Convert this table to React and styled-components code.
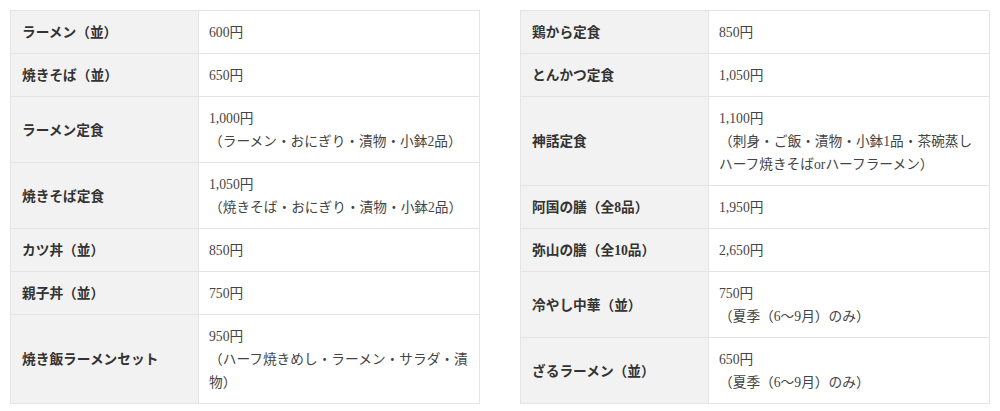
// Packages
import React from "react"
import styled, { createGlobalStyle } from "styled-components"

// Data
const LeftMenu = [
    { name: "ラーメン（並）", price: "600円" },
    { name: "焼きそば（並）", price: "650円" },
    { name: "ラーメン定食", price: "1,000円", note: "（ラーメン・おにぎり・漬物・小鉢2品）" },
    { name: "焼きそば定食", price: "1,050円", note: "（焼きそば・おにぎり・漬物・小鉢2品）" },
    { name: "カツ丼（並）", price: "850円" },
    { name: "親子丼（並）", price: "750円" },
    { name: "焼き飯ラーメンセット", price: "950円", note: "（ハーフ焼きめし・ラーメン・サラダ・漬物）" },
]

const RightMenu = [
    { name: "鶏から定食", price: "850円" },
    { name: "とんかつ定食", price: "1,050円" },
    { name: "神話定食", price: "1,100円", note: "（刺身・ご飯・漬物・小鉢1品・茶碗蒸しハーフ焼きそばorハーフラーメン）" },
    { name: "阿国の膳（全8品）", price: "1,950円" },
    { name: "弥山の膳（全10品）", price: "2,650円" },
    { name: "冷やし中華（並）", price: "750円", note: "（夏季（6～9月）のみ）" },
    { name: "ざるラーメン（並）", price: "650円", note: "（夏季（6～9月）のみ）" },
]

// Styles
const GlobalStyle = createGlobalStyle`
    body {
        margin: 0;
        background: #fff;
        font-family: "Liberation Serif", "Noto Sans CJK JP", serif;
        color: #333;
    }
`

const Page = styled.div`
    display: flex;
    gap: 40px;
    padding: 10px;
    align-items: flex-start;
`

const Table = styled.table`
    width: 471px;
    border-collapse: collapse;
    table-layout: fixed;
    font-size: 13.7px;
    line-height: 23px;
`

const Col = styled.col`
    width: ${props => props.$width || "auto"};
`

const Row = styled.tr`
    border: 1px solid #e4e4e4;
`

const Name = styled.th`
    background-color: #f2f2f2;
    border: 1px solid #e4e4e4;
    padding: 10px 6px 9px 11px;
    text-align: left;
    font-weight: 700;
    color: #333;
    vertical-align: middle;
`

const Price = styled.td`
    border: 1px solid #e4e4e4;
    padding: 10px 4px 9px 10px;
    vertical-align: middle;
    background-color: #fff;
    color: #444;
`

const Note = styled.span`
    display: block;
`

function MenuTable({ items }) {
    return (
        <Table>
            <colgroup>
                <Col $width="188px" />
                <Col />
            </colgroup>
            <tbody>
                {items.map(item => (
                    <Row key={item.name}>
                        <Name>{item.name}</Name>
                        <Price>
                            {item.price}
                            {item.note && <Note>{item.note}</Note>}
                        </Price>
                    </Row>
                ))}
            </tbody>
        </Table>
    )
}

function App() {
    return (
        <>
            <GlobalStyle />
            <Page>
                <MenuTable items={LeftMenu} />
                <MenuTable items={RightMenu} />
            </Page>
        </>
    )
}

export default App
